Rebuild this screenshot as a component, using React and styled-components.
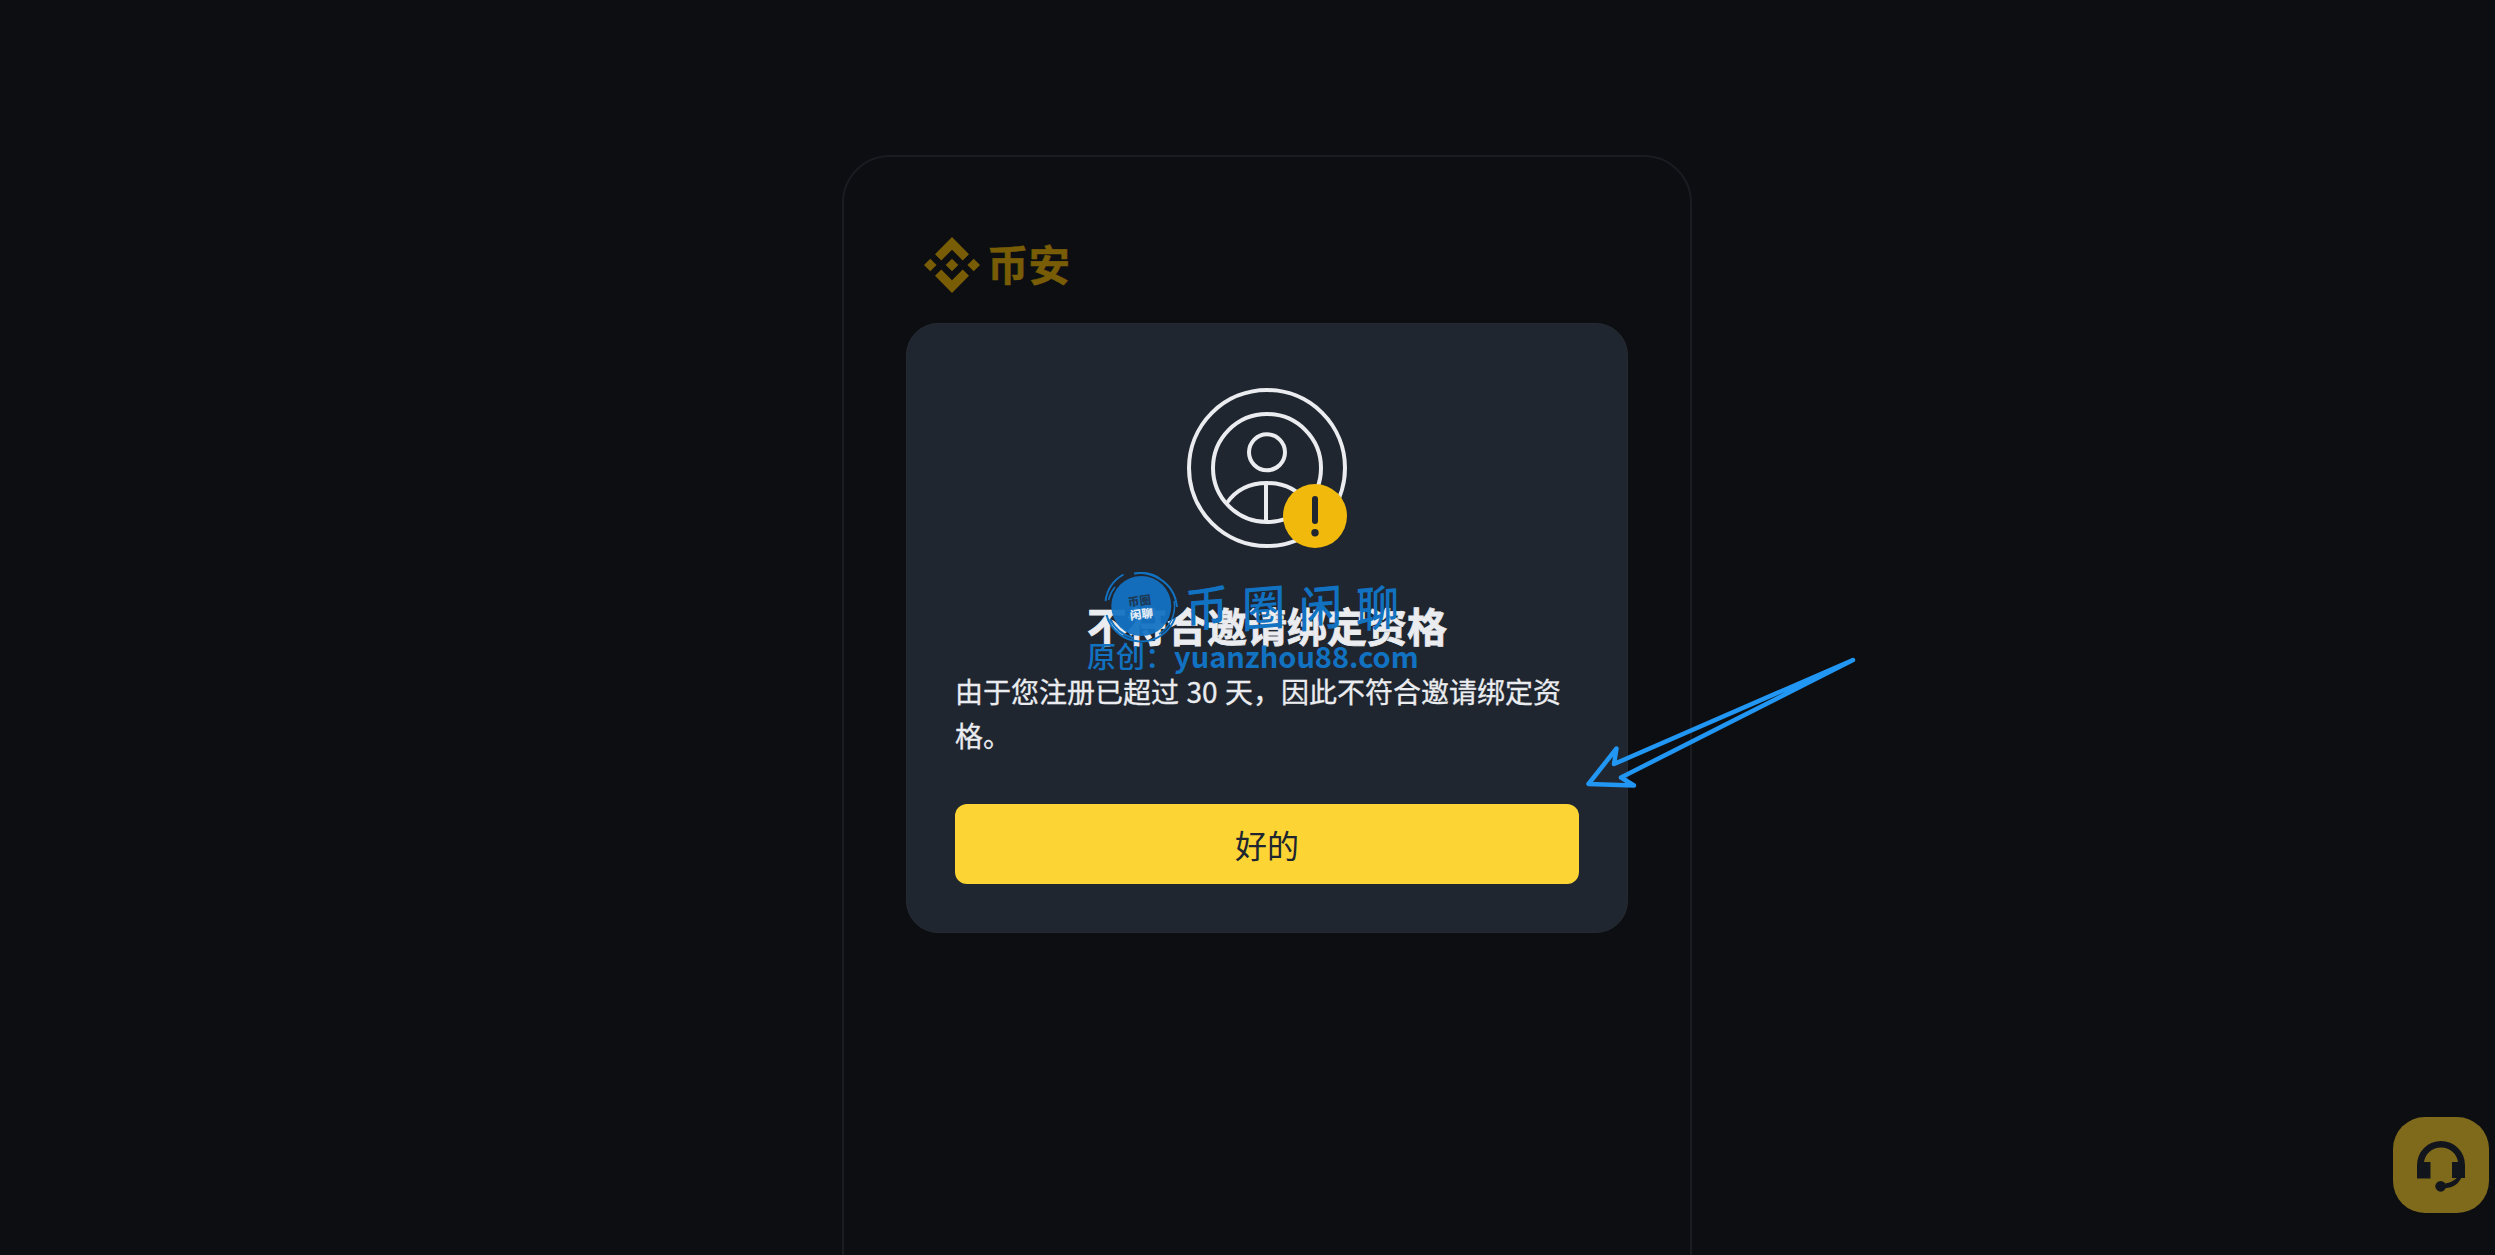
import React from 'react'
import styled, { createGlobalStyle } from 'styled-components'

const GlobalStyle = createGlobalStyle`
    * {
        box-sizing: border-box;
    }

    body {
        margin: 0;
        background: #0c0e12;
        color: #eaecef;
        font-family: 'Noto Sans CJK SC', sans-serif;
        overflow: hidden;
    }
`

function BinanceMark() {
    return (
        <svg width="56" height="56" viewBox="0 0 56 56" fill="currentColor">
            <path d="M28 0L45 17.2L38.7 23.4L28 12.7L17.3 23.4L11 17.2Z" />
            <path d="M28 56L45 38.8L38.7 32.6L28 43.3L17.3 32.6L11 38.8Z" />
            <path d="M6.3 21.7L12.6 28L6.3 34.3L0 28Z" />
            <path d="M28 21.7L34.3 28L28 34.3L21.7 28Z" />
            <path d="M49.7 21.7L56 28L49.7 34.3L43.4 28Z" />
        </svg>
    )
}

function AccountWarning() {
    return (
        <svg width="160" height="160" viewBox="0 0 160 160" fill="none">
            <g stroke="#eaecef" strokeWidth="4">
                <circle cx="80" cy="80" r="78" />
                <circle cx="80" cy="80" r="54" />
                <circle cx="80" cy="64.3" r="18" />
                <path d="M39.5 115.5C48 103 62 95 80 95C98 95 112 103 120.5 115.5" />
                <path d="M79 95V134" />
            </g>
            <circle cx="128" cy="128" r="32" fill="#f0b90b" />
            <rect x="125" y="108" width="6" height="28" rx="3" fill="#202630" />
            <circle cx="128" cy="144.7" r="3.7" fill="#202630" />
        </svg>
    )
}

function Headset() {
    return (
        <svg width="48" height="51" viewBox="0 0 48 51" fill="#12161c">
            <path d="M0 24A24 24 0 0 1 48 24V37H35V21H41A17.2 17.2 0 0 0 7 21H13.5V37.5H0Z" />
            <path d="M41 35C39 39 34 41.5 28.5 42.3V47.3C36 46.5 42 43 44.5 36Z" />
            <circle cx="23.7" cy="45.3" r="5.4" />
        </svg>
    )
}

function Watermark() {
    return (
        <Mark>
            <MarkTop>
                <svg width="76" height="72" viewBox="0 0 76 72" fill="none" stroke="#1272c2">
                    <circle cx="37.3" cy="34" r="30" fill="#1272c2" fillOpacity="0.94" stroke="none" />
                    <path d="M1.5 29A36 36 0 0 1 19.5 2.5" strokeWidth="2" />
                    <path d="M30 1.5C44 -1 70 7 73 35" strokeWidth="2" />
                    <path d="M37 0.8C45 1 51 3 56 7" strokeWidth="2" />
                    <path d="M4.5 28A33 33 0 0 1 11 15" strokeWidth="1.5" />
                    <path d="M70.2 29A33 33 0 0 1 55 62" strokeWidth="1.5" />
                    <path d="M2.5 43A36 36 0 0 0 71 46" strokeWidth="2" />
                    <path d="M6 47C11 57 18 63 29 66" strokeWidth="2" />
                    <g stroke="none" fontFamily="Noto Sans CJK SC, sans-serif" fontSize="11.5" fontWeight="900" textAnchor="middle" transform="rotate(-7 36 34)">
                        <text x="36" y="33" fill="#1d3a57">币圈</text>
                        <text x="36.5" y="46.5" fill="#e3ecf5">闲聊</text>
                    </g>
                </svg>
                <MarkName>
                    <span>币</span>
                    <span>圈</span>
                    <span>闲</span>
                    <span>聊</span>
                </MarkName>
            </MarkTop>
            <MarkSite>
                原创：<b>yuanzhou88.com</b>
            </MarkSite>
        </Mark>
    )
}

function App() {
    return (
        <Page>
            <GlobalStyle />
            <Frame>
                <Brand>
                    <BinanceMark />
                    <span>币安</span>
                </Brand>
                <Modal>
                    <AccountWarning />
                    <Title>不符合邀请绑定资格</Title>
                    <Message>由于您注册已超过 30 天，因此不符合邀请绑定资格。</Message>
                    <Button>好的</Button>
                    <Watermark />
                </Modal>
            </Frame>
            <Support>
                <Headset />
            </Support>
            <Arrow width="280" height="140" viewBox="0 0 280 140">
                <path d="M273 10L34 114L36.5 98.5L8.5 134L54 135.5L41 127.5Z" />
            </Arrow>
        </Page>
    )
}

const Page = styled.div`
    position: relative;
    height: 1255px;
    padding: 155px 0 0 842px;
    overflow: hidden;
`

const Frame = styled.main`
    width: 850px;
    height: 1200px;
    padding: 80px 62px 0;
    border: 2px solid #1b1c21;
    border-radius: 48px;
`

const Brand = styled.div`
    display: flex;
    align-items: center;
    gap: 7px;
    height: 56px;
    margin: 0 0 30px 18px;
    color: #785c06;
    font-size: 41.5px;
    font-weight: 700;
    line-height: 56px;
    -webkit-text-stroke: 0.5px #785c06;

    span {
        margin-top: -4px;
    }
`

const Modal = styled.section`
    position: relative;
    display: flex;
    flex-direction: column;
    align-items: center;
    width: 722px;
    height: 610px;
    padding: 64px 48px 48px;
    border: 1px solid #252a32;
    border-radius: 32px;
    background: #202630;
`

const Title = styled.h1`
    margin: 49px 0 0;
    font-size: 40px;
    font-weight: 700;
    line-height: 56px;
    -webkit-text-stroke: 0.8px #eaecef;
`

const Message = styled.p`
    width: 100%;
    margin: 16px 0 0;
    font-size: 28px;
    line-height: 44px;
    word-spacing: 1.2px;
    -webkit-text-stroke: 0.3px #eaecef;
`

const Button = styled.button`
    width: 100%;
    height: 80px;
    margin-top: auto;
    padding: 0;
    border: 0;
    border-radius: 12px;
    background: #fcd535;
    color: #202630;
    font-family: inherit;
    font-size: 32px;
`

const Mark = styled.div`
    position: absolute;
    left: 180px;
    top: 248px;
    color: #1272c2;
`

const MarkTop = styled.div`
    display: flex;
    height: 72px;
    margin-left: 17px;

    > svg {
        flex: none;
    }
`

/* brush lettering: tall characters that rise slightly to the right */
const MarkName = styled.div`
    display: flex;
    gap: 14px;
    margin-left: 5px;
    font-size: 43px;
    font-weight: 500;
    line-height: 66px;

    span {
        transform: skewY(-5deg) scaleY(1.12);
    }
`

const MarkSite = styled.div`
    margin-top: -5px;
    font-size: 29px;
    font-weight: 500;
    line-height: 32px;
    white-space: nowrap;

    b {
        font-weight: 700;
    }
`

const Support = styled.div`
    position: absolute;
    right: 6px;
    top: 1117px;
    display: flex;
    align-items: center;
    justify-content: center;
    width: 96px;
    height: 96px;
    padding-top: 3px;
    border-radius: 32px;
    background: #7f6a1b;
`

const Arrow = styled.svg`
    position: absolute;
    left: 1580px;
    top: 650px;
    fill: none;
    stroke: #2196f3;
    stroke-width: 4.5;
    stroke-linecap: round;
    stroke-linejoin: round;
`

export default App
